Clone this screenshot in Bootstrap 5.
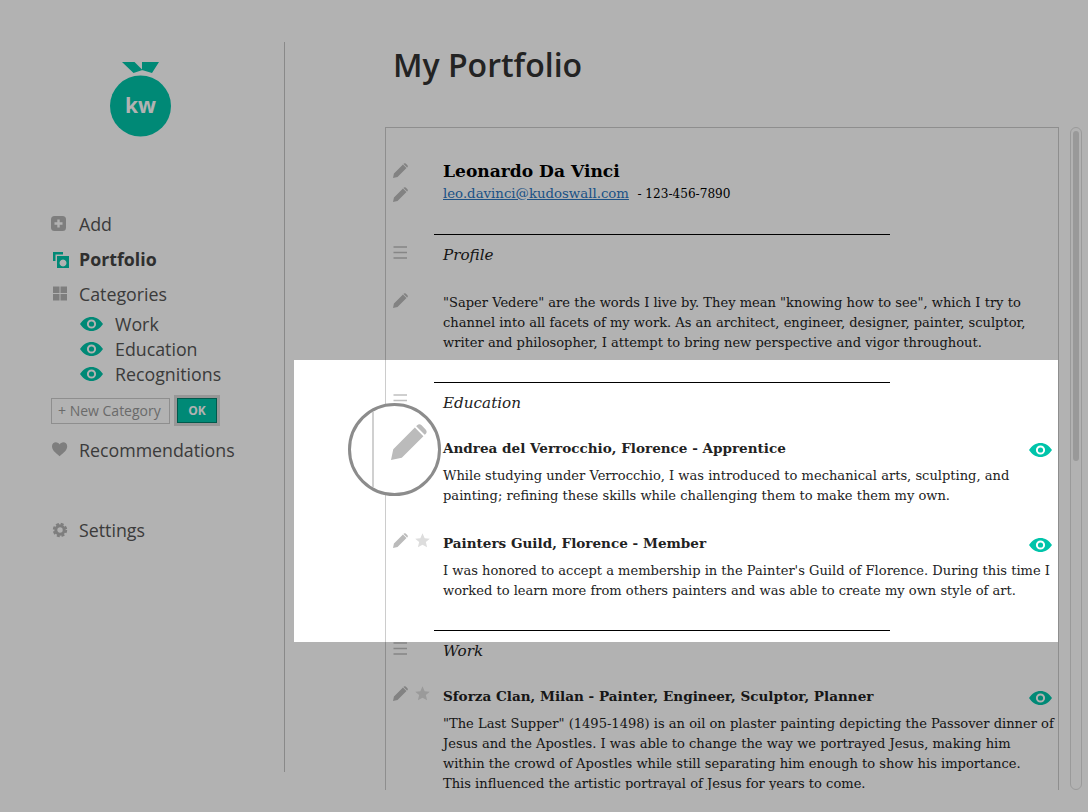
<!DOCTYPE html>
<html lang="en">
<head>
  <meta charset="utf-8">
  <title>My Portfolio</title>
  <link href="https://cdn.jsdelivr.net/npm/bootstrap@5.3.3/dist/css/bootstrap.min.css" rel="stylesheet">
  <style>
    html, body { height: 100%; overflow: hidden; background: #fff; }
    body { font-family: "Open Sans", "Liberation Sans", sans-serif; color: #555; }
    .pf-page { height: 812px; overflow: hidden; position: relative; }
    .pf-side { width: 285px; flex: none; height: 730px; margin-top: 42px; border-right: 1px solid #c4c4c4; padding-top: 20px; }
    .pf-logo { display: block; margin-left: 109px; }
    .pf-menu { margin: 68px 0 0 51px; font-size: 17.8px; line-height: 24px; }
    .pf-menu-item { height: 35px; gap: 12px; }
    .pf-menu-item svg { width: 16px; height: 16px; flex: none; overflow: visible; }
    .pf-sub { height: 25px; gap: 12px; padding-left: 29px; }
    .pf-sub svg { width: 23px; height: 14px; flex: none; }
    .pf-active { font-weight: 700; color: #444; }
    .pf-newrow { margin-top: 10px; height: 29px; gap: 7px; }
    .pf-new { height: 26px; width: 119px; padding: 0 6px; border-radius: 0; border: 1px solid #ccc; font-size: 14px; line-height: 24px; color: #999; background: #fff; white-space: nowrap; }
    .pf-ok { width: 40px; height: 25px; padding: 0; border-radius: 0; background: #00c4aa; border: 1px solid #00806e; color: #fff; font-size: 12px; line-height: 1; font-weight: 700; box-shadow: 0 0 0 3px #d8d8d8; }
    .pf-recs { margin-top: 7px; }
    .pf-settings { margin-top: 45px; }
    .pf-main { width: 774px; flex: none; padding-left: 100px; }
    .pf-title { margin: 42px 0 0 8px; font-size: 32px; line-height: 45px; font-weight: 600; color: #333; }
    .pf-panel { width: 674px; height: 663px; margin-top: 40px; border: 1px solid #ccc; border-bottom: 0; font-family: "DejaVu Serif", "Liberation Serif", serif; font-size: 13.05px; line-height: 20px; color: #222; padding-top: 31px; overflow: hidden; }
    .pf-track { width: 12px; flex: none; height: 663px; margin: 127px 0 0 11px; border: 1px solid #ddd; border-radius: 6px; padding: 3px 2px 0; }
    .pf-thumb { height: 330px; border-radius: 3px; background: #dcdcdc; }
    .pf-gutter { width: 57px; flex: none; padding-left: 7px; gap: 7px; }
    .pf-gutter svg { width: 15px; height: 15px; display: block; }
    .pf-stack { flex-direction: column; gap: 0; padding-top: 4px; }
    .pf-stack svg + svg { margin-top: 9px; }
    .pf-rule { margin-left: 48px; width: 456px; border-top: 1px solid #000; height: 0; margin-top: 29px; }
    .pf-name { font-size: 17.1px; line-height: 24px; font-weight: 700; color: #000; }
    .pf-contact { color: #000; font-size: 13.3px; margin: 1px 0; }
    .pf-contact a { color: #2a76c0; }
    .pf-phone { font-size: 12.1px; }
    .pf-sec { margin-top: 8px; }
    .pf-sec .pf-gutter { margin-top: -1px; padding-top: 4px; }
    .pf-head { font-style: italic; font-size: 15.2px; line-height: 24px; }
    .pf-block { margin-top: 26px; }
    .pf-entry-first { margin-top: 23px; }
    .pf-entry-next { margin-top: 27px; }
    .pf-job-row { height: 20px; margin-bottom: 8px; }
    .pf-job { font-weight: 700; font-size: 13.55px; line-height: 20px; }
    .pf-eye { width: 23px; height: 14px; margin: 4px 6px 0 0; flex: none; }
    .pf-spot { position: absolute; left: 294px; top: 360px; width: 764px; height: 282px; box-shadow: 0 0 0 1500px rgba(0, 0, 0, .3); }
    .pf-lens { position: absolute; left: 348px; top: 403px; width: 93px; height: 93px; border-radius: 50%; border: 3px solid #8c8c8c; background: #fff; overflow: hidden; }
    .pf-lens-line { position: absolute; left: 21px; top: 0; width: 2px; height: 100%; background: #d0d0d0; }
    .pf-lens svg { position: absolute; left: 40px; top: 18px; width: 36px; height: 36px; }
  </style>
</head>
<body>
  <svg width="0" height="0" class="position-absolute">
    <defs>
      <symbol id="i-pencil" viewBox="0 0 16 16"><path fill="#bbb" d="M0 16 L1 11.2 L10.6 1.6 L14.4 5.400 L4.8 15 Z M11.6 .6 Q12.6 -.3 13.6 .6 L15.4 2.4 Q16.3 3.4 15.4 4.4 L15 4.8 L11.2 1 Z"/></symbol>
      <symbol id="i-bars" viewBox="0 0 15 15"><path fill="#c0c0c0" d="M.5 .2h13.500v1.600H.5zM.5 5.700h13.500v1.600H.5zM.5 11.200h13.500v1.600H.5z"/></symbol>
      <symbol id="i-star" viewBox="0 0 16 16"><path fill="#ddd" d="M8 .3l2.3 5.2 5.5.5-4.2 3.7 1.3 5.6L8 12.4l-4.9 2.9 1.3-5.6L.2 6l5.5-.5z"/></symbol>
      <symbol id="i-eye" viewBox="0 0 23 14"><path fill="#00c4aa" fill-rule="evenodd" d="M0 7 C3 2.4 7 0 11.5 0 S20 2.4 23 7 C20 11.6 16 14 11.5 14 S3 11.6 0 7 Z M11.5 2.4 A4.6 4.6 0 1 0 11.5 11.6 A4.6 4.6 0 1 0 11.5 2.4 Z"/><circle cx="11.5" cy="7" r="2.6" fill="#00c4aa"/></symbol>
    </defs>
  </svg>

  <div class="pf-page d-flex">
    <div class="pf-side">
      <svg class="pf-logo" width="63" height="76" viewBox="0 0 63 76">
        <path fill="#00c4aa" d="M13 0h12.500l8 8-9 3zM33 0h17l-7 11-10-3z"/>
        <circle cx="31.500" cy="44" r="30.500" fill="#00c4aa"/>
        <text x="31.500" y="51" text-anchor="middle" font-family="Open Sans, sans-serif" font-weight="700" font-size="21" fill="#fff">kw</text>
      </svg>

      <div class="pf-menu">
        <div class="pf-menu-item d-flex align-items-center">
          <svg viewBox="0 0 16 16"><rect width="15" height="15" rx="3.500" fill="#b5b5b5"/><path fill="#fff" d="M6.300 3.500h2.400v2.800h2.800v2.400H8.700v2.800H6.300V8.700H3.500V6.300h2.800z"/></svg>
          <span>Add</span>
        </div>
        <div class="pf-menu-item pf-active d-flex align-items-center">
          <svg viewBox="-2 -1 16 16"><path fill="#00c4aa" d="M0 0h10v2.500H2.500V9H0z"/><path fill="#00c4aa" fill-rule="evenodd" d="M4 4h12v12H4z M10 7.500a3.500 3.500 0 1 0 .01 0z"/><path fill="#00c4aa" d="M8.500 4h3v2.500h-3z"/></svg>
          <span>Portfolio</span>
        </div>
        <div class="pf-menu-item d-flex align-items-center">
          <svg viewBox="-2 0 16 16"><path fill="#b5b5b5" d="M0 .5h6.500V7H0zM7.500 .5H14V7H7.500zM0 8h6.500v6.500H0zM7.500 8H14v6.500H7.500z"/></svg>
          <span>Categories</span>
        </div>
        <div class="pf-sub d-flex align-items-center"><svg><use href="#i-eye"/></svg><span>Work</span></div>
        <div class="pf-sub d-flex align-items-center"><svg><use href="#i-eye"/></svg><span>Education</span></div>
        <div class="pf-sub d-flex align-items-center"><svg><use href="#i-eye"/></svg><span>Recognitions</span></div>
        <div class="pf-newrow d-flex align-items-center">
          <div class="form-control pf-new">+ New Category</div>
          <button class="btn pf-ok" type="button">OK</button>
        </div>
        <div class="pf-menu-item pf-recs d-flex align-items-center">
          <svg viewBox="-1 0 16 16"><path fill="#b5b5b5" d="M8 15.500 C3 11.500 0 8.800 0 5 C0 2.200 2 .8 4 .8 C5.800 .8 7.200 1.800 8 3.200 C8.800 1.800 10.200 .8 12 .8 C14 .8 16 2.200 16 5 C16 8.800 13 11.500 8 15.500 Z" transform="translate(0 -.5) scale(.95)"/></svg>
          <span>Recommendations</span>
        </div>
        <div class="pf-menu-item pf-settings d-flex align-items-center">
          <svg viewBox="-1 0 16 16"><circle cx="8" cy="8" r="4.200" fill="none" stroke="#b5b5b5" stroke-width="3"/><circle cx="8" cy="8" r="6.200" fill="none" stroke="#b5b5b5" stroke-width="2" stroke-dasharray="3 1.870"/></svg>
          <span>Settings</span>
        </div>
      </div>
    </div>

    <div class="pf-main">
      <h1 class="pf-title">My Portfolio</h1>
      <div class="pf-panel">
        <div class="d-flex">
          <div class="pf-gutter pf-stack d-flex">
            <svg><use href="#i-pencil"/></svg>
            <svg><use href="#i-pencil"/></svg>
          </div>
          <div>
            <div class="pf-name">Leonardo Da Vinci</div>
            <div class="pf-contact"><a href="#">leo.davinci@kudoswall.com</a>&nbsp; <span class="pf-phone">- 123-456-7890</span></div>
          </div>
        </div>

        <div class="pf-rule"></div>
        <div class="d-flex pf-sec">
          <div class="pf-gutter"><svg><use href="#i-bars"/></svg></div>
          <div class="pf-head">Profile</div>
        </div>
        <div class="d-flex pf-block">
          <div class="pf-gutter"><svg><use href="#i-pencil"/></svg></div>
          <div>"Saper Vedere" are the words I live by. They mean "knowing how to see", which I try to<br>channel into all facets of my work. As an architect, engineer, designer, painter, sculptor,<br>writer and philosopher, I attempt to bring new perspective and vigor throughout.</div>
        </div>

        <div class="pf-rule"></div>
        <div class="d-flex pf-sec">
          <div class="pf-gutter"><svg><use href="#i-bars"/></svg></div>
          <div class="pf-head">Education</div>
        </div>
        <div class="d-flex pf-entry-first">
          <div class="pf-gutter d-flex"><svg><use href="#i-pencil"/></svg></div>
          <div class="flex-grow-1">
            <div class="d-flex justify-content-between align-items-center pf-job-row">
              <div class="pf-job">Andrea del Verrocchio, Florence - Apprentice</div>
              <svg class="pf-eye"><use href="#i-eye"/></svg>
            </div>
            <div>While studying under Verrocchio, I was introduced to mechanical arts, sculpting, and<br>painting; refining these skills while challenging them to make them my own.</div>
          </div>
        </div>
        <div class="d-flex pf-entry-next">
          <div class="pf-gutter d-flex"><svg><use href="#i-pencil"/></svg><svg><use href="#i-star"/></svg></div>
          <div class="flex-grow-1">
            <div class="d-flex justify-content-between align-items-center pf-job-row">
              <div class="pf-job">Painters Guild, Florence - Member</div>
              <svg class="pf-eye"><use href="#i-eye"/></svg>
            </div>
            <div>I was honored to accept a membership in the Painter's Guild of Florence. During this time I<br>worked to learn more from others painters and was able to create my own style of art.</div>
          </div>
        </div>

        <div class="pf-rule"></div>
        <div class="d-flex pf-sec">
          <div class="pf-gutter"><svg><use href="#i-bars"/></svg></div>
          <div class="pf-head">Work</div>
        </div>
        <div class="d-flex pf-entry-first">
          <div class="pf-gutter d-flex"><svg><use href="#i-pencil"/></svg><svg><use href="#i-star"/></svg></div>
          <div class="flex-grow-1">
            <div class="d-flex justify-content-between align-items-center pf-job-row">
              <div class="pf-job">Sforza Clan, Milan - Painter, Engineer, Sculptor, Planner</div>
              <svg class="pf-eye"><use href="#i-eye"/></svg>
            </div>
            <div>"The Last Supper" (1495-1498) is an oil on plaster painting depicting the Passover dinner of<br>Jesus and the Apostles. I was able to change the way we portrayed Jesus, making him<br>within the crowd of Apostles while still separating him enough to show his importance.<br>This influenced the artistic portrayal of Jesus for years to come.</div>
          </div>
        </div>
      </div>
    </div>
    <div class="pf-track"><div class="pf-thumb"></div></div>

    <div class="pf-spot"></div>
    <div class="pf-lens">
      <div class="pf-lens-line"></div>
      <svg viewBox="0 0 16 16"><path fill="#bbb" d="M0 16 L1 11.200 L10.600 1.600 L14.400 5.400 L4.800 15 Z M11.600 .6 Q12.600 -.3 13.600 .6 L15.400 2.400 Q16.300 3.400 15.400 4.400 L15 4.800 L11.200 1 Z"/></svg>
    </div>
  </div>

  <script src="https://cdn.jsdelivr.net/npm/bootstrap@5.3.3/dist/js/bootstrap.bundle.min.js"></script>
</body>
</html>
